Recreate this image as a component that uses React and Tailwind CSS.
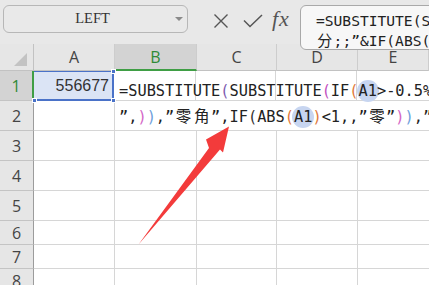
const mono = "font-['DejaVu_Sans_Mono',monospace]";
const cjk = "font-['Noto_Sans_CJK_SC',sans-serif]";

function Hl({ children }) {
  return (
    <span className="rounded-full bg-[#c7d5f0] px-[2px] -mx-[2px] py-[2px]">{children}</span>
  );
}

function Cj({ children, w }) {
  return (
    <span className={`inline-block text-center ${cjk} ${w}`}>{children}</span>
  );
}

function Hdr({ w, children, sel }) {
  return (
    <div
      className={`${w} flex items-center justify-center border-r border-[#cdcdcd] ${
        sel
          ? "bg-[#d3d3d3] text-[#2f8a37] border-b-2 border-b-[#3f9e45]"
          : "bg-[#e6e6e6] text-[#444] border-b border-b-[#c2c2c2]"
      }`}
    >
      {children}
    </div>
  );
}

function Row({ n, h, sel, children }) {
  return (
    <div className={`flex ${h}`}>
      <div
        className={`w-[34px] shrink-0 flex items-center justify-center border-b border-[#c4c4c4] text-[16px] font-['Open_Sans',sans-serif] ${
          sel
            ? "bg-[#d3d3d3] text-[#2f8a37] border-r-2 border-r-[#3f9e45]"
            : "bg-[#e6e6e6] text-[#444] border-r border-r-[#9c9c9c]"
        }`}
      >
        {n}
      </div>
      {children || (
        <>
          <div className="w-[80px] shrink-0 border-r border-b border-[#d6d6d6]" />
          <div className="w-[82px] shrink-0 border-r border-b border-[#d6d6d6]" />
          <div className="w-[80px] shrink-0 border-r border-b border-[#d6d6d6]" />
          <div className="w-[81px] shrink-0 border-r border-b border-[#d6d6d6]" />
          <div className="flex-1 border-b border-[#d6d6d6]" />
        </>
      )}
    </div>
  );
}

export default function App() {
  return (
    <div className="relative w-[429px] h-[285px] overflow-hidden bg-white">
      {/* toolbar */}
      <div className="flex h-[44px] items-start bg-[#e8e8e8]">
        <div className="ml-[3px] mt-[5px] flex h-[28px] w-[185px] items-center rounded-[6px] border border-[#b7b7b7] bg-[#e9e9e9]">
          <span className="flex-1 pl-[6px] text-center font-['Liberation_Serif',serif] text-[14.5px] text-[#333]">
            LEFT
          </span>
          <svg width="8" height="5" viewBox="0 0 8 5" className="mr-[4px]">
            <path d="M0 0 L8 0 L4 4 Z" fill="#8a8a8a" />
          </svg>
        </div>
        <div className="ml-[25px] mt-[12px] flex items-center">
          <svg width="16" height="16" viewBox="0 0 16 16">
            <path d="M1.5 1.5 L14.5 14.5 M14.5 1.5 L1.5 14.5" stroke="#555" strokeWidth="1.4" fill="none" />
          </svg>
          <svg width="20" height="14" viewBox="0 0 20 14" className="ml-[14px]">
            <path d="M1 6.5 L7 12.5 L19 1" stroke="#555" strokeWidth="1.5" fill="none" />
          </svg>
          <span className="ml-[9px] -mt-[4px] font-['Liberation_Serif',serif] italic text-[22px] leading-none text-[#555] tracking-[1px]">
            fx
          </span>
        </div>
      </div>

      {/* column header */}
      <div className="flex h-[27px] text-[16px] font-['Open_Sans',sans-serif]">
        <div className="w-[34px] shrink-0 relative bg-[#e6e6e6] border-r border-b border-[#c2c2c2] flex items-end justify-end pr-[6px] pb-[4px]">
          <svg width="13" height="13" viewBox="0 0 13 13">
            <path d="M13 0 L13 13 L0 13 Z" fill="#c3c3c3" />
          </svg>
        </div>
        <Hdr w="w-[81px] shrink-0">A</Hdr>
        <Hdr w="w-[82px] shrink-0" sel>B</Hdr>
        <Hdr w="w-[80px] shrink-0">C</Hdr>
        <Hdr w="w-[81px] shrink-0">D</Hdr>
        <Hdr w="flex-1">E</Hdr>
      </div>

      {/* rows */}
      <Row n="1" h="h-[30px]" sel>
        <div className="w-[80px] shrink-0 relative bg-[#dbe4f5] border-b-2 border-r-2 border-t border-[#4a72c8] flex items-center justify-end pr-[3px] font-['Liberation_Sans',sans-serif] text-[16px] text-[#333]">
          556677
          <span className="absolute -right-[4px] -top-[3px] w-[5px] h-[5px] bg-[#4a72c8] border border-white" />
          <span className="absolute -right-[4px] -bottom-[4px] w-[5px] h-[5px] bg-[#4a72c8] border border-white" />
          <span className="absolute -left-[2px] -bottom-[4px] w-[5px] h-[5px] bg-[#4a72c8] border border-white" />
        </div>
        <div className="w-[82px] shrink-0 border-r border-b border-[#d6d6d6]" />
        <div className="w-[80px] shrink-0 border-r border-b border-[#d6d6d6]" />
        <div className="w-[81px] shrink-0 border-r border-b border-[#d6d6d6]" />
        <div className="flex-1 border-b border-[#d6d6d6]" />
      </Row>
      <Row n="2" h="h-[30px]">
        <div className="w-[81px] shrink-0 border-r border-b border-[#d6d6d6]" />
        <div className="w-[82px] shrink-0 border-b border-[#d6d6d6]" />
        <div className="w-[80px] shrink-0 border-b border-[#d6d6d6]" />
        <div className="w-[81px] shrink-0 border-b border-[#d6d6d6]" />
        <div className="flex-1 border-b border-[#d6d6d6]" />
      </Row>
      <Row n="3" h="h-[30px]">
        <div className="w-[81px] shrink-0 border-r border-b border-[#d6d6d6]" />
        <div className="w-[82px] shrink-0 border-r border-b border-[#d6d6d6]" />
        <div className="w-[80px] shrink-0 border-r border-b border-[#d6d6d6]" />
        <div className="w-[81px] shrink-0 border-r border-b border-[#d6d6d6]" />
        <div className="flex-1 border-b border-[#d6d6d6]" />
      </Row>
      {[
        ["4", "h-[30px]"],
        ["5", "h-[30px]"],
        ["6", "h-[24px]"],
        ["7", "h-[24px]"],
        ["8", "h-[24px]"],
      ].map(([n, h]) => (
        <Row key={n} n={n} h={h}>
          <div className="w-[81px] shrink-0 border-r border-b border-[#d6d6d6]" />
          <div className="w-[82px] shrink-0 border-r border-b border-[#d6d6d6]" />
          <div className="w-[80px] shrink-0 border-r border-b border-[#d6d6d6]" />
          <div className="w-[81px] shrink-0 border-r border-b border-[#d6d6d6]" />
          <div className="flex-1 border-b border-[#d6d6d6]" />
        </Row>
      ))}

      {/* overflowing cell text of B1 */}
      <div className={`absolute left-[119px] top-[79px] whitespace-nowrap ${mono} text-[15.3px] leading-[24px] text-[#222]`}>
        <div>
          =SUBSTITUTE<span className="text-[#7d5bb0]">(</span>SUBSTITUTE
          <span className="text-[#c24fc0]">(</span>IF<span className="text-[#e0783a]">(</span>
          <Hl>A1</Hl>&gt;-0.5%
        </div>
        <div>
          ”,<span className="text-[#d466c6]">)</span>
          <span className="text-[#6f9fdc]">)</span>,”
          <Cj w="w-[18.4px] text-[15.5px]">零</Cj>
          <Cj w="w-[18.4px] text-[15.5px]">角</Cj>”,IF
          <span className="text-[#333]">(</span>ABS<span className="text-[#e0783a]">(</span>
          <Hl>A1</Hl>
          <span className="text-[#e0783a]">)</span>&lt;1,,”<Cj w="w-[18.4px] text-[15.5px]">零</Cj>”
          <span className="text-[#d466c6]">)</span>
          <span className="text-[#6f9fdc]">)</span>,”
        </div>
      </div>

      {/* formula bar */}
      <div className={`absolute left-[300px] top-[5px] w-[140px] h-[45px] rounded-[6px] border border-[#a9a9a9] bg-[#f7f7f7] pl-[15px] pt-[5px] whitespace-nowrap overflow-hidden ${mono} text-[14.6px] leading-[19px] text-[#222]`}>
        <div>=SUBSTITUTE(SUBSTITUTE</div>
        <div>
          <Cj w="w-[17.6px] text-[15px]">分</Cj>;;”&amp;IF(ABS(A1)
        </div>
      </div>

      {/* red arrow */}
      <svg className="absolute left-0 top-0 pointer-events-none" width="429" height="285" viewBox="0 0 429 285">
        <path
          d="M138.5 244.5 L209 148 L206 139.5 L229 126.5 L223 152.5 L220 149.5 Z"
          fill="#f33b3b"
        />
      </svg>
    </div>
  );
}
